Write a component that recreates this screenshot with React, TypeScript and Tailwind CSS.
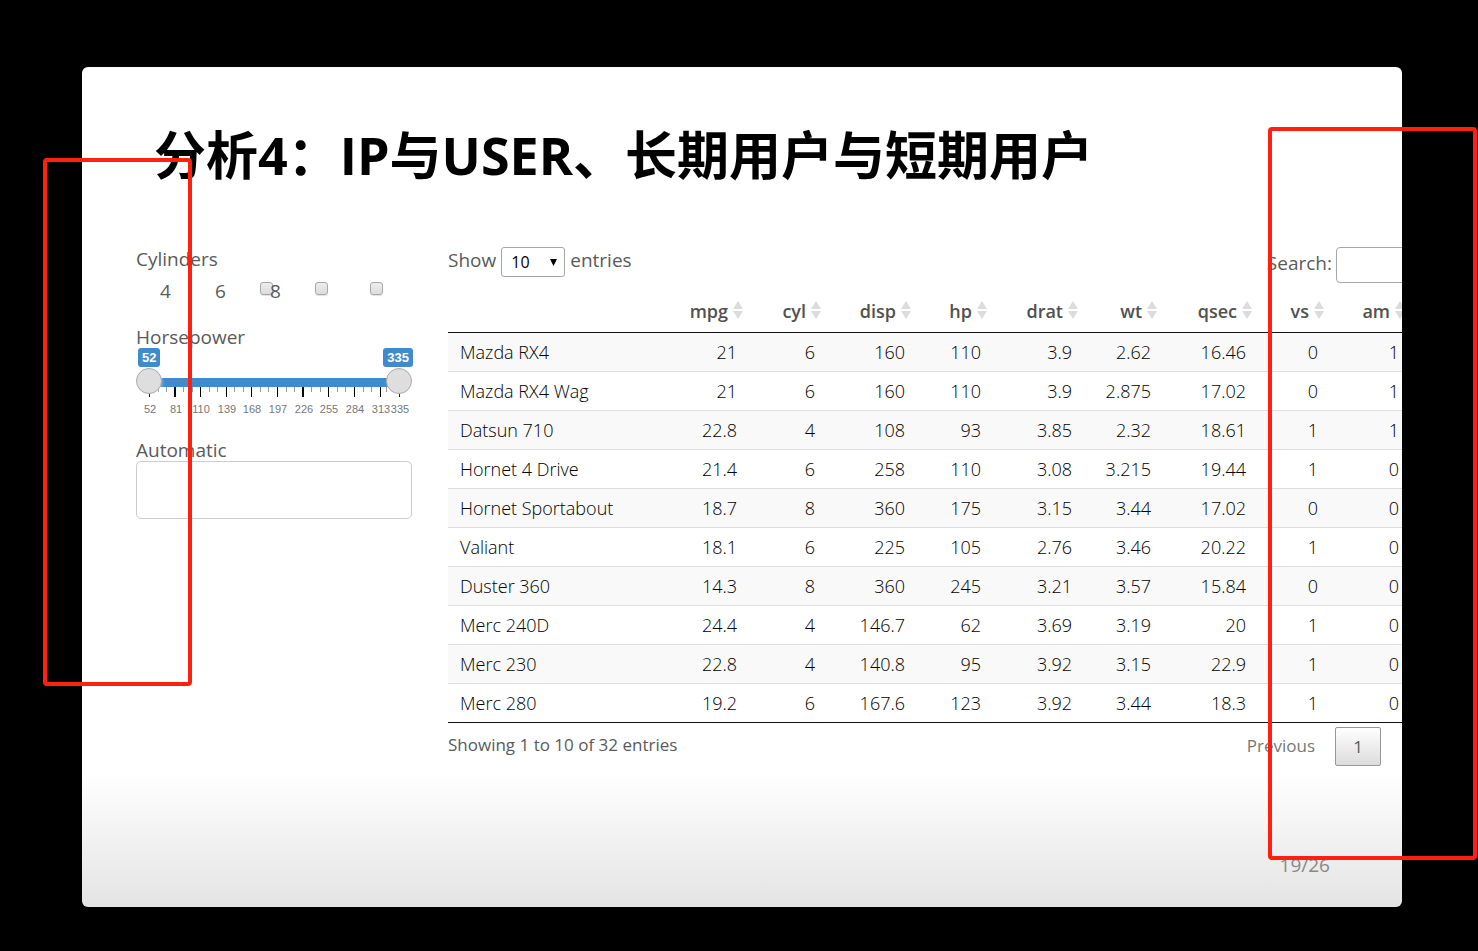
import React from "react";

const columns = [
  { name: "mpg", width: "w-[76px]" },
  { name: "cyl", width: "w-[78px]" },
  { name: "disp", width: "w-[90px]" },
  { name: "hp", width: "w-[76px]" },
  { name: "drat", width: "w-[91px]" },
  { name: "wt", width: "w-[79px]" },
  { name: "qsec", width: "w-[95px]" },
  { name: "vs", width: "w-[72px]" },
  { name: "am", width: "w-[81px]" },
];

const cars: string[][] = [
  ["Mazda RX4", "21", "6", "160", "110", "3.9", "2.62", "16.46", "0", "1"],
  ["Mazda RX4 Wag", "21", "6", "160", "110", "3.9", "2.875", "17.02", "0", "1"],
  ["Datsun 710", "22.8", "4", "108", "93", "3.85", "2.32", "18.61", "1", "1"],
  ["Hornet 4 Drive", "21.4", "6", "258", "110", "3.08", "3.215", "19.44", "1", "0"],
  ["Hornet Sportabout", "18.7", "8", "360", "175", "3.15", "3.44", "17.02", "0", "0"],
  ["Valiant", "18.1", "6", "225", "105", "2.76", "3.46", "20.22", "1", "0"],
  ["Duster 360", "14.3", "8", "360", "245", "3.21", "3.57", "15.84", "0", "0"],
  ["Merc 240D", "24.4", "4", "146.7", "62", "3.69", "3.19", "20", "1", "0"],
  ["Merc 230", "22.8", "4", "140.8", "95", "3.92", "3.15", "22.9", "1", "0"],
  ["Merc 280", "19.2", "6", "167.6", "123", "3.92", "3.44", "18.3", "1", "0"],
];

const MIN = 52;
const MAX = 335;
const marks = [52, 81, 110, 139, 168, 197, 226, 255, 284, 313, 335];
const place = (v: number) => Math.round(13 + ((v - MIN) / (MAX - MIN)) * 250);
const isWide = (v: number) => v === 81 || v === 226;

function SliderScale() {
  const minor: number[] = [];
  marks.slice(0, -1).forEach((m, i) => {
    const a = place(m);
    const b = place(marks[i + 1]);
    minor.push(Math.round(a + (b - a) / 3), Math.round(a + ((b - a) * 2) / 3));
  });
  return (
    <svg viewBox="0 0 276 30" className="block h-[30px] w-full overflow-visible" aria-hidden="true">
      {minor.map((x) => (
        <rect key={x} x={x} y="0" width="1" height="5" fill="#999" />
      ))}
      {marks.map((m) => (
        <g key={m}>
          <rect x={isWide(m) ? place(m) - 1 : place(m)} y="0" width={isWide(m) ? 2 : 1} height="10" fill="#000" />
          <text
            x={place(m) + 1}
            y="26"
            textAnchor="middle"
            fontSize="11"
            fill="#777"
            fontFamily="'Liberation Sans', sans-serif"
          >
            {m}
          </text>
        </g>
      ))}
    </svg>
  );
}

const rangeClass =
  "pointer-events-none absolute inset-x-0 top-0 m-0 h-[26px] w-full appearance-none bg-transparent outline-none [&::-webkit-slider-thumb]:pointer-events-auto [&::-webkit-slider-thumb]:size-[26px] [&::-webkit-slider-thumb]:appearance-none [&::-webkit-slider-thumb]:rounded-full [&::-webkit-slider-thumb]:border [&::-webkit-slider-thumb]:border-[#aaa] [&::-webkit-slider-thumb]:bg-[#dedede] [&::-webkit-slider-thumb]:shadow-[1px_1px_3px_rgba(255,255,255,0.3)]";

function Filters() {
  return (
    <form className="w-[276px] shrink-0 text-[19px] leading-6 text-[#5a5a5a]">
      <fieldset>
        <legend>Cylinders</legend>
        <div className="mt-2 flex">
          {["4", "6", "8"].map((c) => (
            <label key={c} className="relative w-[55px] pl-6">
              {c}
              <input
                type="checkbox"
                className="absolute top-[3px] left-[124px] size-[13px] appearance-none rounded-[3px] border border-[#a8a8a8] bg-linear-to-b from-[#ededed] to-[#dcdcdc] shadow-[0_1px_1px_rgba(0,0,0,0.12)]"
              />
            </label>
          ))}
        </div>
      </fieldset>

      <label htmlFor="hp-min" className="mt-[22px] block">
        Horsepower
      </label>
      <div className="-mt-px flex justify-between px-px font-['Liberation_Sans',sans-serif] text-[13px] leading-[19px] font-bold text-white">
        <output className="ml-px rounded-[3px] bg-[#428bca] px-1">52</output>
        <output className="-mr-0.5 rounded-[3px] bg-[#428bca] px-1">335</output>
      </div>
      <div className="relative mt-px h-[19px] pt-[10px]">
        <div className="mx-[13px] h-[9px] bg-[#428bca]" />
        <input id="hp-min" type="range" min={MIN} max={MAX} defaultValue={MIN} className={rangeClass} />
        <input aria-label="Horsepower maximum" type="range" min={MIN} max={MAX} defaultValue={MAX} className={rangeClass} />
      </div>
      <SliderScale />

      <label htmlFor="automatic" className="mt-[21px] block">
        Automatic
      </label>
      <input
        id="automatic"
        type="text"
        className="-mt-px block h-[58px] w-full rounded-[5px] border border-[#ccc] bg-white px-3"
      />
    </form>
  );
}

function SortIcon() {
  return (
    <svg viewBox="0 0 10 18" className="absolute top-3 right-1 h-[18px] w-[10px]" aria-hidden="true">
      <path d="M5 0L10 8H0z" fill="#dcdcdc" />
      <path d="M0 10H10L5 18z" fill="#dcdcdc" />
    </svg>
  );
}

function CarTable() {
  return (
    <section className="w-[961px] shrink-0 text-[#5a5a5a]">
      <div className="flex items-start justify-between text-[19px]">
        <label className="flex items-start gap-[5px] leading-[26px]">
          Show
          <span className="relative flex">
            <select
              defaultValue="10"
              className="h-[30px] w-16 appearance-none rounded-[3px] border border-[#a6a6a6] bg-white pl-[9px] text-base leading-[26px] text-black"
            >
              <option>10</option>
            </select>
            <svg viewBox="0 0 8 8" className="pointer-events-none absolute top-3 right-2 size-[7px]" aria-hidden="true">
              <path d="M0 0H8L4 8z" fill="#000" />
            </svg>
          </span>
          entries
        </label>
        <label className="flex items-start gap-1 leading-8">
          Search:
          <input type="search" className="h-9 w-[73px] rounded-[4px] border border-[#a6a6a6] bg-white px-2" />
        </label>
      </div>

      <table className="mt-1.5 w-full table-fixed border-separate border-spacing-0 text-right">
        <thead>
          <tr>
            <th className="h-11 border-b border-[#111]" aria-label="Model" />
            {columns.map((c) => (
              <th key={c.name} className={`${c.width} relative h-11 border-b border-[#111] pr-[19px] text-lg leading-6 font-semibold text-[#515151]`}>
                {c.name}
                <SortIcon />
              </th>
            ))}
          </tr>
        </thead>
        <tbody className="text-lg leading-[22px] font-light text-black">
          {cars.map((car) => (
            <tr key={car[0]} className="group odd:bg-[#f9f9f9]">
              {car.map((value, i) => (
                <td
                  key={i}
                  className={`border-[#ddd] px-2.5 py-2 group-[:not(:first-child)]:border-t group-last:border-b group-last:border-b-[#111] ${i === 0 ? "pl-3 text-left" : ""}`}
                >
                  {value}
                </td>
              ))}
            </tr>
          ))}
        </tbody>
      </table>

      <div className="mt-1 flex items-start justify-between pr-7 text-[17px]">
        <p className="leading-9">Showing 1 to 10 of 32 entries</p>
        <nav className="flex items-start gap-5 leading-[37px] text-[#777]" aria-label="Table pages">
          <button type="button">Previous</button>
          <button
            type="button"
            className="h-[39px] w-[46px] rounded-[2px] border border-[#979797] bg-linear-to-b from-white to-[#dcdcdc] text-[#5a5a5a]"
          >
            1
          </button>
        </nav>
      </div>
    </section>
  );
}

export default function App() {
  return (
    <div className="relative min-h-screen overflow-hidden bg-black pt-[67px] pr-[76px] pb-11 pl-[82px] font-['Open_Sans','Noto_Sans_CJK_SC',sans-serif]">
      <main className="flex min-h-[840px] flex-col overflow-hidden rounded-md bg-white bg-linear-to-b from-white from-84% to-[#e4e4e4] pl-[54px]">
        <h1 className="mt-[52px] ml-[18px] text-[52px] leading-[72px] font-bold whitespace-nowrap text-black">
          分析4：IP与USER、长期用户与短期用户
        </h1>
        <div className="mt-14 flex gap-9">
          <Filters />
          <CarTable />
        </div>
        <footer className="mt-auto mr-[72px] mb-[30px] text-right text-[19px] leading-6 text-[#888]">19/26</footer>
      </main>
      <div className="pointer-events-none absolute top-[158px] left-[43px] h-[528px] w-[149px] rounded-[4px] border-4 border-[#ff2010]" />
      <div className="pointer-events-none absolute top-[127px] left-[1268px] h-[733px] w-[209px] rounded-[4px] border-4 border-[#ff2010]" />
    </div>
  );
}
